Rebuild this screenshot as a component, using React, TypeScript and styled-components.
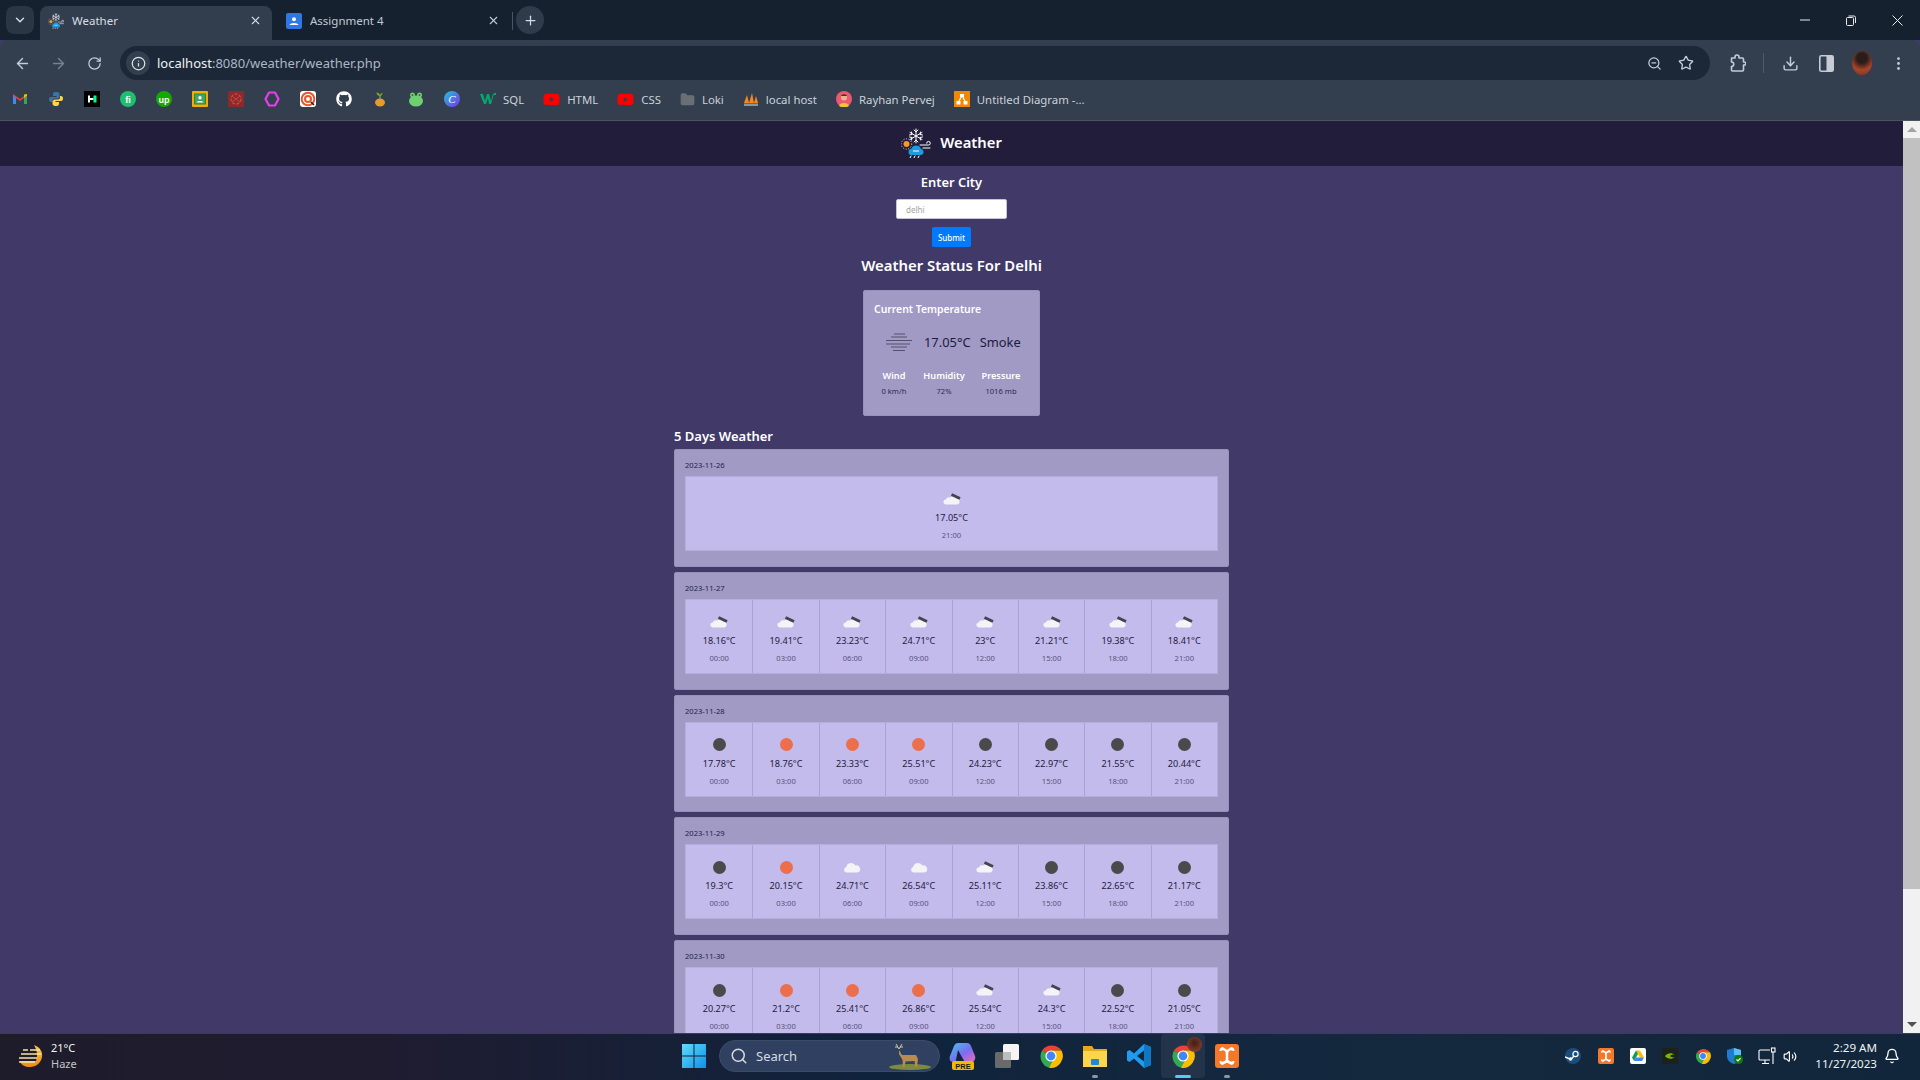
import React from "react";
import styled, { createGlobalStyle } from "styled-components";
import { ArrowLeft, ArrowRight, RotateCw, Info, ZoomOut, Star, Download, EllipsisVertical, Search, Bell, Volume2, X, Plus, ChevronDown, Folder } from "lucide-react";
import { FaGithub, FaYoutube } from "react-icons/fa";

const UI = `"Noto Sans", "Open Sans", "Liberation Sans", sans-serif`;

const Global = createGlobalStyle`
  html, body { margin: 0; padding: 0; height: 100%; overflow: hidden; }
  * { box-sizing: border-box; }
  body { font-family: ${UI}; }
`;

const Screen = styled.div`
  width: 1920px; height: 1080px; display: flex; flex-direction: column; overflow: hidden; background: #413a69;
`;

/* ---------- browser chrome ---------- */
const TabStrip = styled.div`
  height: 40px; background: #162130; display: flex; align-items: flex-end; flex: none; padding-left: 6px; color: #d5dbe3;
`;
const TabSwitcher = styled.div`
  width: 28px; height: 28px; margin-bottom: 6px; border-radius: 8px; background: #2b3645; display: flex; align-items: center; justify-content: center; margin-right: 6px;
`;
const Tab = styled.div<{ $active?: boolean }>`
  width: 232px; height: 34px; border-radius: 8px 8px 0 0; display: flex; align-items: center; padding: 0 10px 5px 8px; flex: none;
  font-size: 11.5px; gap: 8px; background: ${(p) => (p.$active ? "#323d4d" : "transparent")};
  color: ${(p) => (p.$active ? "#d7dde5" : "#c3cad4")};
  & + & { margin-left: 6px; }
`;
const TabTitle = styled.span`flex: 1; white-space: nowrap;`;
const TabDivider = styled.div`width: 1px; height: 18px; background: #4a5563; margin: 0 3px 10px 2px;`;
const NewTab = styled.div`
  width: 28px; height: 28px; border-radius: 50%; background: #2f3a4a; margin-bottom: 6px; display: flex; align-items: center; justify-content: center;
`;
const WindowControls = styled.div`
  margin-left: auto; display: flex; height: 40px; align-items: center; color: #e8ebef;
`;
const WindowBtn = styled.div`
  width: 46px; display: flex; align-items: center; justify-content: center;
`;
const Toolbar = styled.div`
  flex: none; height: 81px; background: #333e4e; border-bottom: 1px solid #4b535d; border-radius: 8px 8px 0 0; margin-top: 0;
`;
const NavRow = styled.div`
  height: 40px; display: flex; align-items: center; padding-top: 6px; color: #c5ccd6;
`;
const NavBtn = styled.div<{ $dim?: boolean }>`
  width: 36px; display: flex; align-items: center; justify-content: center; color: ${(p) => (p.$dim ? "#77818f" : "#c5ccd6")}; flex: none;
`;
const NavBtns = styled.div`display: flex; padding-left: 4px; width: 120px; flex: none;`;
const Omnibox = styled.div`
  width: 1590px; height: 34px; border-radius: 17px; background: #1c2838; display: flex; align-items: center; padding: 0 8px 0 6px; flex: none;
`;
const InfoBadge = styled.div`
  width: 24px; height: 24px; border-radius: 50%; background: #333e4e; display: flex; align-items: center; justify-content: center; margin-right: 7px; color: #dfe3e8;
`;
const Url = styled.span`
  font-size: 13px; color: #aeb6c1; flex: 1; white-space: nowrap; margin-top: -1px;
  b { font-weight: 400; color: #eef1f4; }
`;
const OmniIcon = styled.div`
  width: 32px; display: flex; justify-content: center; align-items: center; color: #c5ccd6;
`;
const ToolIcons = styled.div`
  display: flex; align-items: center; padding-left: 9px; flex: 1; color: #c5ccd6;
`;
const ToolSlot = styled.div`
  width: 36px; display: flex; justify-content: center; align-items: center;
`;
const ToolSep = styled.div`width: 1px; height: 20px; background: #4f5a69; margin: 0 8px 0 8px;`;
const Avatar = styled.div`
  width: 20px; height: 24px; border-radius: 50%; background: radial-gradient(circle at 50% 30%, #2a1c18 0 25%, #a8452a 60%, #7b3120); 
`;
const BookmarkRow = styled.div`
  height: 40px; display: flex; align-items: center; padding: 0 0 2px 9px; color: #ccd2da; font-size: 11.4px;
`;
const Bookmark = styled.div`
  display: flex; align-items: center; gap: 7px; height: 24px; padding: 0 16px 0 3px; white-space: nowrap; flex: none;
`;
const BookmarkIconOnly = styled.div`
  width: 36px; display: flex; align-items: center; justify-content: flex-start; padding-left: 3px; flex: none;
`;

/* ---------- page ---------- */
const Viewport = styled.div`flex: 1; min-height: 0; display: flex;`;
const Page = styled.main`
  flex: 1; min-width: 0; background: #413a69; overflow: hidden; display: flex; flex-direction: column; align-items: center; color: #fff;
  & > * { flex: none; }
`;
const Scrollbar = styled.div`
  width: 17px; flex: none; background: #f1f1f1; display: flex; flex-direction: column; align-items: center;
`;
const ScrollArrow = styled.div<{ $down?: boolean }>`
  height: 17px; flex: none; display: flex; align-items: center; justify-content: center; width: 100%;
  &::before { content: ""; border-left: 5px solid transparent; border-right: 5px solid transparent;
    ${(p) => (p.$down ? "border-top: 5px solid #505050;" : "border-bottom: 5px solid #a3a3a3;")} }
`;
const ScrollThumb = styled.div`width: 100%; height: 751px; background: #c1c1c1; flex: none;`;
const ScrollRest = styled.div`flex: 1;`;

const NavBar = styled.header`
  width: 100%; height: 45px; background: #231d3c; display: flex; align-items: center; justify-content: center; gap: 9px; padding-bottom: 2px;
`;
const Brand = styled.span`font-size: 14.8px; font-weight: 600; line-height: 1;`;
const FormHeading = styled.h3`
  margin: 6px 0 0; font-size: 12.9px; line-height: 20px; font-weight: 600;
`;
const CityInput = styled.input`
  display: block; margin-top: 7px; width: 111px; height: 20px; border: 1px solid #c5c2d4; border-radius: 2px; background: #fff; padding: 0 9px; font-size: 8px;
  font-family: ${UI}; &::placeholder { color: #a3a3a3; }
`;
const Submit = styled.button`
  display: block; margin-top: 8px; width: 39px; height: 20px; border: 0; border-radius: 2px; background: #007bff; color: #fff; font-size: 8px; font-weight: 500; font-family: ${UI}; padding: 0;
`;
const StatusTitle = styled.h2`
  margin: 6px 0 0; font-size: 14.9px; line-height: 24px; font-weight: 600;
`;
const CurrentCard = styled.section`
  margin-top: 13px; width: 177px; height: 126px; background: #a09ac5; border: 1px solid #9791bb; border-radius: 2px; padding: 10px 10px 0; display: flex; flex-direction: column;
`;
const CardTitle = styled.h4`margin: 0; font-size: 10.4px; line-height: 16px; font-weight: 600;`;
const CurrentRow = styled.div`
  display: flex; align-items: center; height: 30px; margin-top: 10px; padding-left: 11px; color: #1f1a40;
`;
const CurrentTemp = styled.span`font-size: 12.9px; margin-left: 11px;`;
const CurrentDesc = styled.span`font-size: 12.9px; margin-left: 9px;`;
const Stats = styled.div`
  display: grid; grid-template-columns: 40px 60px 54px; margin-top: 12px; text-align: center;
`;
const StatLabel = styled.div`font-size: 9.2px; line-height: 14px; font-weight: 600;`;
const StatValue = styled.div`font-size: 7.6px; line-height: 12px; margin-top: 2px; color: #2f2a55;`;
const FiveWrap = styled.section`width: 555px; margin-top: 10px;`;
const FiveTitle = styled.h3`margin: 0 0 3px; font-size: 13px; line-height: 20px; font-weight: 600;`;
const DayCard = styled.article`
  height: 117.75px; margin-bottom: 5px; background: #a09ac5; border: 1px solid #9791bb; border-radius: 2px; padding: 9px 10px 0;
`;
const DayDate = styled.div`font-size: 7.6px; line-height: 12px; margin-bottom: 5px; color: #231e48;`;
const Cells = styled.div`
  display: grid; grid-auto-flow: column; grid-auto-columns: 1fr; height: 75px; background: #c2bbeb; border: 1px solid #b5aedd;
`;
const Cell = styled.div`
  display: flex; flex-direction: column; align-items: center; padding-top: 12px; border-left: 1px solid #aaa2d0;
  &:first-child { border-left: 0; }
`;
const CellIcon = styled.div`height: 20px; display: flex; align-items: center; justify-content: center;`;
const CellTemp = styled.div`font-size: 9.1px; line-height: 14px; margin-top: 2px; color: #1f1a40; white-space: nowrap;`;
const CellTime = styled.div`font-size: 7.6px; line-height: 12px; margin-top: 4px; color: #595380;`;

const Dot = styled.div<{ $c: string }>`
  width: 13px; height: 13px; border-radius: 50%; background: ${(p) => p.$c};
`;

/* ---------- taskbar ---------- */
const Taskbar = styled.footer`
  height: 47px; flex: none; display: flex; align-items: center; padding-bottom: 2px; border-top: 1px solid #3c3e4a; color: #fff;
  background: linear-gradient(90deg, #1e1c2b 0%, #1f1c30 20%, #10233c 45%, #14293e 75%, #11263a 100%);
`;
const Widget = styled.div`
  width: 672px; flex: none; display: flex; align-items: center; padding-left: 18px; gap: 7px;
`;
const WidgetText = styled.div`font-size: 11px; line-height: 16px; color: #f3f3f3; span { display: block; color: #c4c4c8; }`;
const AppSlot = styled.div<{ $active?: boolean }>`
  width: 44px; height: 44px; flex: none; display: flex; align-items: center; justify-content: center; position: relative; border-radius: 4px;
  ${(p) => (p.$active ? "background: #23344a;" : "")}
`;
const RunDot = styled.span<{ $active?: boolean }>`
  position: absolute; bottom: 0; left: 50%; transform: translateX(-50%); height: 3px; border-radius: 2px;
  width: ${(p) => (p.$active ? "16px" : "6px")}; background: ${(p) => (p.$active ? "#5cc8f8" : "#8d97a4")};
`;
const AvatarBadge = styled.span`
  position: absolute; top: 3px; right: 3px; width: 15px; height: 15px; border-radius: 50%; background: radial-gradient(circle at 50% 40%, #3a2018, #a3452b);
`;
const SearchBox = styled.div`
  width: 221px; height: 32px; margin-left: 3px; margin-right: 1px; border-radius: 16px; background: #2f4060; border: 1px solid #3d4c66; display: flex; align-items: center; padding: 0 6px 0 10px; gap: 8px; font-size: 13px; color: #d6dae0; flex: none;
`;
const SearchLabel = styled.span`flex: 1;`;
const Tray = styled.div`margin-left: auto; display: flex; align-items: center;`;
const TraySlot = styled.div<{ $w?: number }>`
  width: ${(p) => p.$w ?? 32.3}px; display: flex; justify-content: center; align-items: center; flex: none;
`;
const Clock = styled.div`
  margin-left: 18px; text-align: right; font-size: 11.6px; line-height: 16px; color: #f0f2f4; white-space: nowrap;
`;
const BellSlot = styled.div`width: 30px; margin-right: 13px; display: flex; justify-content: center; flex: none;`;

/* ---------- drawings ---------- */
const LogoIcon = ({ size = 30 }: { size?: number }) => (
  <svg width={size} height={size} viewBox="0 0 30 30" fill="none">
    <g stroke="#fff" strokeWidth="1" strokeLinecap="round">
      <path d="M15 1v14M9 4.500l12 7M21 4.500l-12 7" />
      <path d="M13 2l2 2 2-2M13 14l2-2 2 2M8.500 7l2.500-.5-.5-2.500M21.500 9l-2.500.5.5 2.500M21.500 7l-2.500-.5.5-2.500M8.500 9l2.500.5-.5 2.500" />
      <path d="M19 17h8.500a1.800 1.800 0 1 0-1.800-1.800M22 20h7" />
      <path d="M10 28l-1 2M14 28l-1 2M18 28l-1 2" />
    </g>
    <circle cx="5.500" cy="16" r="3" fill="#f59a23" />
    <circle cx="5.500" cy="16" r="5.200" stroke="#ddd" strokeDasharray="1 1.600" />
    <path d="M10 27a3.200 3.200 0 0 1 .4-6.300 5 5 0 0 1 9.400 0 3.200 3.200 0 0 1 .2 6.300z" fill="#1d9be2" />
    <path d="M12 23h6" stroke="#fff" />
  </svg>
);
const MistIcon = () => (
  <svg width="28" height="20" viewBox="0 0 28 20" stroke="#55506c" strokeWidth="1.200">
    <path d="M9 2h11M6 5h16M1 8.500h26M1 12h24M6 15h16M8 18.500h12" />
  </svg>
);
const CloudDark = () => (
  <svg width="18" height="12" viewBox="0 0 18 12">
    <path d="M3 11.500a2.500 2.500 0 0 1-.2-5 3.500 3.500 0 0 1 4.500-2 4 4 0 0 1 6 1 3 3 0 0 1 .5 6z" fill="#f4f4f6" />
    <path d="M8.500 1.500L17 5.500" stroke="#45434f" strokeWidth="3" />
  </svg>
);
const CloudWhite = () => (
  <svg width="18" height="12" viewBox="0 0 18 12">
    <path d="M3.500 11.500a2.800 2.800 0 0 1-.3-5.500 5 5 0 0 1 9.300-1.500 3.600 3.600 0 0 1 2 7z" fill="#f4f4f6" />
  </svg>
);
const Gmail = () => (
  <svg width="16" height="16" viewBox="0 0 16 16"><path d="M1 3v10h3V7l4 3 4-3v6h3V3l-7 5z" fill="#ea4335" /><path d="M1 4v9h3V7z" fill="#4285f4" /><path d="M15 4v9h-3V7z" fill="#34a853" /><path d="M12 3.500V7l3-2.300V3z" fill="#fbbc04" /></svg>
);
const Python = () => (
  <svg width="16" height="16" viewBox="0 0 16 16"><path d="M8 1C5 1 5 2.500 5 4v1h3.500v1H3C1.500 6 1 7 1 8.500S1.500 11 3 11h1.500V9.500C4.500 8 5.500 7.500 7 7.500h2.500C11 7.500 11.500 6.500 11.500 5V3C11.500 1.500 10 1 8 1z" fill="#3776ab" /><path d="M8 15c3 0 3-1.500 3-3v-1H7.500v-1H13c1.500 0 2-1 2-2.500S14.500 5 13 5h-1v1.500C12 8 11 8.500 9.500 8.500H7C5.500 8.500 4.500 9.500 4.500 11v1.500C4.500 14.500 6 15 8 15z" fill="#ffd343" /></svg>
);
const Hn = () => (
  <svg width="16" height="16" viewBox="0 0 16 16"><rect width="16" height="16" fill="#000" /><path d="M4 4.500h2v7H4zM6 7h3.500v2H6z" fill="#fff" /><path d="M9.500 4.500h3v7h-3z" fill="#00fe8e" /></svg>
);
const Circ = ({ c, t, tc = "#fff" }: { c: string; t: string; tc?: string }) => (
  <svg width="16" height="16" viewBox="0 0 16 16"><circle cx="8" cy="8" r="8" fill={c} /><text x="8" y="11.500" textAnchor="middle" fontSize="9" fontWeight="700" fontFamily="Liberation Sans" fill={tc}>{t}</text></svg>
);
const Classroom = () => (
  <svg width="16" height="16" viewBox="0 0 16 16"><rect width="16" height="16" rx="1" fill="#f9ab00" /><rect x="2" y="2.500" width="12" height="11" fill="#1e8e3e" /><rect x="3" y="3.500" width="10" height="9" fill="#fff" opacity=".18" /><circle cx="8" cy="6.800" r="1.700" fill="#fff" /><path d="M4.500 11.500c.5-2 6.500-2 7 0z" fill="#fff" /></svg>
);
const Assign = () => (
  <svg width="16" height="16" viewBox="0 0 16 16"><rect width="16" height="16" rx="2" fill="#2f76e6" /><circle cx="8" cy="6.200" r="2" fill="#fff" /><path d="M3.500 12c.6-2.800 8.400-2.800 9 0z" fill="#fff" /></svg>
);
const RedSq = () => (
  <svg width="16" height="16" viewBox="0 0 16 16"><rect width="16" height="16" fill="#8a2a2a" /><circle cx="8" cy="8" r="5" fill="none" stroke="#c9463f" strokeWidth="1.300" strokeDasharray="3 1.300" /><path d="M4 5l8 6M12 5l-8 6" stroke="#c9463f" /></svg>
);
const PinkRing = () => (
  <svg width="16" height="16" viewBox="0 0 16 16"><path d="M5 1.500h6L14.500 8 11 14.500H5L1.500 8z" fill="none" stroke="#ea3cf0" strokeWidth="2.200" strokeLinejoin="round" /></svg>
);
const Target = () => (
  <svg width="16" height="16" viewBox="0 0 16 16"><rect width="16" height="16" rx="3" fill="#fff" /><circle cx="8" cy="8" r="6.300" fill="none" stroke="#e8562a" strokeWidth="2" /><circle cx="8" cy="8" r="3" fill="none" stroke="#e8562a" strokeWidth="2" /><path d="M11 11l3 3" stroke="#222" strokeWidth="1.500" /></svg>
);
const Sprout = () => (
  <svg width="16" height="16" viewBox="0 0 16 16"><ellipse cx="8" cy="11.500" rx="5" ry="4" fill="#e99a2c" /><path d="M8 8V4" stroke="#7a9a2a" strokeWidth="1.500" /><path d="M8 5C6 5 4.500 3.500 4.500 1.500 6.500 1.500 8 3 8 5zM8 5c1 0 2.500-1 2.500-3C9 2 8 3 8 5z" fill="#86a82a" /></svg>
);
const Frog = () => (
  <svg width="16" height="16" viewBox="0 0 16 16"><circle cx="4.500" cy="4" r="2.500" fill="#6fcf73" /><circle cx="11.500" cy="4" r="2.500" fill="#6fcf73" /><ellipse cx="8" cy="10" rx="7" ry="5.500" fill="#6fcf73" /><circle cx="4.500" cy="4" r=".9" fill="#2d6b30" /><circle cx="11.500" cy="4" r=".9" fill="#2d6b30" /></svg>
);
const Canva = () => (
  <svg width="16" height="16" viewBox="0 0 16 16"><defs><linearGradient id="cv" x1="0" y1="0" x2="1" y2="1"><stop offset="0" stopColor="#1fc7d4" /><stop offset="1" stopColor="#7b2ff2" /></linearGradient></defs><circle cx="8" cy="8" r="8" fill="url(#cv)" /><text x="8" y="12" textAnchor="middle" fontSize="11" fontStyle="italic" fontFamily="Liberation Serif" fill="#fff">C</text></svg>
);
const W3 = () => (
  <svg width="16" height="16" viewBox="0 0 16 16"><path d="M0 3h3l2 7 2-7h2l2 7 2-7h1l-3 10h-2L8 7l-2 6H4z" fill="#04aa6d" /><path d="M14 2h2v2h-2z" fill="#04aa6d" /></svg>
);
const Flame = () => (
  <svg width="16" height="16" viewBox="0 0 16 16"><path d="M1 12L4 4l2 8zM6 12l3-10 2 10zM11 12l2-7 2 7z" fill="#f28a1c" /><path d="M1 12.500h14V15H1z" fill="#8b93a5" /></svg>
);
const Person = () => (
  <svg width="16" height="16" viewBox="0 0 16 16"><circle cx="8" cy="8" r="8" fill="#ea5a70" /><circle cx="8" cy="6.500" r="3" fill="#e9b58c" /><path d="M3 15c1-4 9-4 10 0l-2 1H5z" fill="#f4c430" /><path d="M5 5c.5-2.500 5.500-2.500 6 0z" fill="#5a2c1c" /></svg>
);
const Drawio = () => (
  <svg width="16" height="16" viewBox="0 0 16 16"><rect width="16" height="16" fill="#f08705" /><path d="M6 3h4v3.500H6zM2.500 10h4v3.500h-4zM9.500 10h4v3.500h-4z" fill="#fff" /><path d="M7 6.500L5 10M9 6.500l2 3.500" stroke="#fff" strokeWidth="1.300" /></svg>
);
const ExtensionIcon = () => (
  <svg width="17" height="19" viewBox="0 0 17 19" fill="none" stroke="#c5ccd6" strokeWidth="1.600" strokeLinejoin="round">
    <path d="M2.500 4H6V3a2 2 0 0 1 4 0v1h3.500a1 1 0 0 1 1 1v3h.8a1.500 1.500 0 0 1 0 3h-.8v5a1 1 0 0 1-1 1h-10a1 1 0 0 1-1-1v-3.500a2 2 0 0 0 0-4.500V5a1 1 0 0 1 1-1z" />
  </svg>
);
const SidePanel = () => (
  <svg width="15" height="17" viewBox="0 0 15 17"><rect x=".8" y=".8" width="13.400" height="15.400" rx="1.500" fill="none" stroke="#c5ccd6" strokeWidth="1.600" /><rect x="7.500" y="1" width="6.500" height="15" fill="#c5ccd6" /></svg>
);
const Restore = () => (
  <svg width="10" height="11" viewBox="0 0 10 11" fill="none" stroke="#e8ebef"><rect x=".5" y="2.500" width="7" height="8" rx="1" /><path d="M2.500 1h5.500a1.500 1.500 0 0 1 1.500 1.500V8" /></svg>
);
const WinClose = () => <svg width="11" height="11" viewBox="0 0 11 11" stroke="#e8ebef"><path d="M.5.500l10 10M10.500.500l-10 10" /></svg>;
const WinMin = () => <svg width="10" height="2" viewBox="0 0 10 2" stroke="#e8ebef"><path d="M0 1h10" /></svg>;

const HazeIcon = () => (
  <svg width="26" height="24" viewBox="0 0 26 24"><defs><linearGradient id="hz" x1="0" y1="0" x2="0" y2="1"><stop offset="0" stopColor="#f8c44b" /><stop offset="1" stopColor="#f08a12" /></linearGradient></defs>
    <path d="M16 1c6 2 9 7 8 12-1 6-6 10-12 10-5 0-9-2-10-6h16c2-5 1-11-2-16z" fill="url(#hz)" />
    <path d="M5 6h5M12 6h10M3 10h20M1 14h18M1 18h16" stroke="#f6e2a8" strokeWidth="1.600" />
  </svg>
);
const WinLogo = () => (
  <svg width="24" height="24" viewBox="0 0 24 24"><defs><linearGradient id="wl" x1="0" y1="0" x2="1" y2="1"><stop offset="0" stopColor="#5fdcfb" /><stop offset="1" stopColor="#0f8fe6" /></linearGradient></defs><path d="M0 0h11.500v11.500H0zM12.500 0H24v11.500H12.500zM0 12.500h11.500V24H0zM12.500 12.500H24V24H12.500z" fill="url(#wl)" /></svg>
);
const Deer = () => (
  <svg width="46" height="30" viewBox="0 0 46 30"><ellipse cx="23" cy="26" rx="21" ry="3" fill="#7c8a3e" /><path d="M12 9l3 5 14 0 2 4-1 8h-1.500l-1-6-9 .5-1 5.500H16l-.5-7L12 13z" fill="#b98a52" /><path d="M9 3l3 5M15 3l-3 5M8 6h3M16 6h-3" stroke="#d9c9a8" /></svg>
);
const Copilot = () => (
  <svg width="28" height="30" viewBox="0 0 28 30"><defs><linearGradient id="cp" x1="0" y1="0" x2="1" y2="1"><stop offset="0" stopColor="#3ec8f0" /><stop offset=".55" stopColor="#7b6cf0" /><stop offset="1" stopColor="#f06cc0" /></linearGradient></defs><path d="M9 2h9c2 0 3 1 4 3l4 10c1 3-1 6-4 6h-4c-2 0-3-1-4-3L9 9 7 19c0 1-1 2-3 2-3 0-4-3-3-6L5 5c1-2 2-3 4-3z" fill="url(#cp)" /><rect x="3" y="20" width="22" height="9" rx="2" fill="#f5b800" /><text x="14" y="27.500" textAnchor="middle" fontSize="7.500" fontWeight="700" fontFamily="Liberation Sans" fill="#1b1b1b">PRE</text></svg>
);
const TaskView = () => (
  <svg width="24" height="24" viewBox="0 0 24 24"><rect x="8" y="0" width="16" height="16" rx="1.500" fill="#f5f5f5" /><rect x="0" y="8" width="16" height="16" rx="1.500" fill="#6a6a6a" /><rect x="8" y="8" width="8" height="8" fill="#bdbdbd" /></svg>
);
const Chrome = ({ s = 24 }: { s?: number }) => (
  <svg width={s} height={s} viewBox="0 0 24 24"><path d="M12 12L3 6.500A12 12 0 0 1 22.500 6.500H12z" fill="#ea4335" /><path d="M12 12l-9-5.500A12 12 0 0 0 10 23.800L15.500 17z" fill="#34a853" /><path d="M12 6.500h10.500A12 12 0 0 1 10 23.800l5-9z" fill="#fbbc04" /><circle cx="12" cy="12" r="5.600" fill="#fff" /><circle cx="12" cy="12" r="4.400" fill="#4285f4" /></svg>
);
const Explorer = () => (
  <svg width="24" height="24" viewBox="0 0 24 24"><path d="M0 2h9l2 3h13v4H0z" fill="#e7a91c" /><path d="M0 7h24v16H0z" fill="#fbd54c" /><rect x="8" y="15" width="8" height="6" rx="1" fill="#1e88d8" /></svg>
);
const VsCode = () => (
  <svg width="24" height="24" viewBox="0 0 24 24"><path d="M17 0l7 3v18l-7 3-10-9.500-4.500 3.500L0 16.500V7.500L2.500 6 7 9.500z" fill="#1f9cf0" /><path d="M17 6.500L10 12l7 5.500z" fill="#10243c" /><path d="M17 0l7 3v18l-7 3z" fill="#0e78c2" /></svg>
);
const Xampp = ({ s = 24 }: { s?: number }) => (
  <svg width={s} height={s} viewBox="0 0 24 24"><rect width="24" height="24" rx="3" fill="#f4772a" /><path d="M7 5c4 0 6 3 5 7s1 7 5 7M17 5c-4 0-6 3-5 7s-1 7-5 7" fill="none" stroke="#fff" strokeWidth="2.400" /><path d="M5.500 7a3 3 0 0 1 3-3M5.500 17a3 3 0 0 0 3 3M18.500 7a3 3 0 0 0-3-3M18.500 17a3 3 0 0 1-3 3" fill="none" stroke="#fff" strokeWidth="2" /></svg>
);
const Steam = () => (
  <svg width="16" height="16" viewBox="0 0 16 16"><circle cx="8" cy="8" r="8" fill="#1a4c7c" /><circle cx="10.500" cy="6" r="2.600" fill="none" stroke="#fff" strokeWidth="1.200" /><path d="M0 9l6 2.500 3-3.500" stroke="#fff" strokeWidth="1.400" fill="none" /><circle cx="5.500" cy="11" r="1.800" fill="#fff" /></svg>
);
const Drive = () => (
  <svg width="16" height="16" viewBox="0 0 16 16"><rect width="16" height="16" rx="2" fill="#fff" /><path d="M6 2.500h4l-2 3.700z" fill="#fbbc04" /><path d="M6 2.500L2 9.500l2 3.500 4-7z" fill="#0f9d58" /><path d="M10 2.500l4 7h-4L8 6z" fill="#fbbc04" /><path d="M4 13h8l2-3.500H6z" fill="#4285f4" /></svg>
);
const Nvidia = () => (
  <svg width="16" height="16" viewBox="0 0 16 16"><rect width="16" height="16" fill="#1c2219" /><path d="M3 8c2-3 7-4 10-1-2-1-4 0-5 1 1 1 3 2 5 1-3 3-8 2-10-1z" fill="#76b900" /></svg>
);
const Shield = () => (
  <svg width="16" height="16" viewBox="0 0 16 16"><path d="M7 0l7 2v6c0 4-3 7-7 8-4-1-7-4-7-8V2z" fill="#1f7ad1" /><path d="M7 0l7 2v5H7z" fill="#5cc1f2" /><circle cx="11.500" cy="11.500" r="4.500" fill="#0f7b0f" /><path d="M9.500 11.500l1.500 1.500 2.500-2.800" stroke="#fff" fill="none" strokeWidth="1.200" /></svg>
);
const Network = () => (
  <svg width="18" height="18" viewBox="0 0 18 18" fill="none" stroke="#fff" strokeWidth="1.100"><path d="M12 3H2a1 1 0 0 0-1 1v8a1 1 0 0 0 1 1h10M7 13v3M4 16.500h7" /><rect x="13.500" y="1" width="3.500" height="4" /><path d="M15 5v12" /></svg>
);

const days: { date: string; cells: [string, string, string][] }[] = [
  { date: "2023-11-26", cells: [["17.05°C", "21:00", "c"]] },
  { date: "2023-11-27", cells: [["18.16°C", "00:00", "c"], ["19.41°C", "03:00", "c"], ["23.23°C", "06:00", "c"], ["24.71°C", "09:00", "c"], ["23°C", "12:00", "c"], ["21.21°C", "15:00", "c"], ["19.38°C", "18:00", "c"], ["18.41°C", "21:00", "c"]] },
  { date: "2023-11-28", cells: [["17.78°C", "00:00", "d"], ["18.76°C", "03:00", "o"], ["23.33°C", "06:00", "o"], ["25.51°C", "09:00", "o"], ["24.23°C", "12:00", "d"], ["22.97°C", "15:00", "d"], ["21.55°C", "18:00", "d"], ["20.44°C", "21:00", "d"]] },
  { date: "2023-11-29", cells: [["19.3°C", "00:00", "d"], ["20.15°C", "03:00", "o"], ["24.71°C", "06:00", "w"], ["26.54°C", "09:00", "w"], ["25.11°C", "12:00", "c"], ["23.86°C", "15:00", "d"], ["22.65°C", "18:00", "d"], ["21.17°C", "21:00", "d"]] },
  { date: "2023-11-30", cells: [["20.27°C", "00:00", "d"], ["21.2°C", "03:00", "o"], ["25.41°C", "06:00", "o"], ["26.86°C", "09:00", "o"], ["25.54°C", "12:00", "c"], ["24.3°C", "15:00", "c"], ["22.52°C", "18:00", "d"], ["21.05°C", "21:00", "d"]] },
];

const WeatherGlyph = ({ k }: { k: string }) =>
  k === "c" ? <CloudDark /> : k === "w" ? <CloudWhite /> : <Dot $c={k === "d" ? "#4a4a4c" : "#ec6e4a"} />;

const iconOnly = [<Gmail />, <Python />, <Hn />, <Circ c="#1dbf73" t="fi" />, <Circ c="#14a800" t="up" />, <Classroom />, <RedSq />, <PinkRing />, <Target />, <FaGithub size={16} color="#fff" />, <Sprout />, <Frog />, <Canva />];

export default function App() {
  return (
    <Screen>
      <Global />
      <TabStrip>
        <TabSwitcher><ChevronDown size={14} strokeWidth={2.500} /></TabSwitcher>
        <Tab $active>
          <LogoIcon size={16} />
          <TabTitle>Weather</TabTitle>
          <X size={13} />
        </Tab>
        <Tab>
          <Assign />
          <TabTitle>Assignment 4</TabTitle>
          <X size={13} />
        </Tab>
        <TabDivider />
        <NewTab><Plus size={15} /></NewTab>
        <WindowControls>
          <WindowBtn><WinMin /></WindowBtn>
          <WindowBtn><Restore /></WindowBtn>
          <WindowBtn><WinClose /></WindowBtn>
        </WindowControls>
      </TabStrip>
      <Toolbar>
        <NavRow>
          <NavBtns>
            <NavBtn><ArrowLeft size={17} /></NavBtn>
            <NavBtn $dim><ArrowRight size={17} /></NavBtn>
            <NavBtn><RotateCw size={15} /></NavBtn>
          </NavBtns>
          <Omnibox>
            <InfoBadge><Info size={15} /></InfoBadge>
            <Url><b>localhost</b>:8080/weather/weather.php</Url>
            <OmniIcon><ZoomOut size={15} /></OmniIcon>
            <OmniIcon><Star size={16} /></OmniIcon>
          </Omnibox>
          <ToolIcons>
            <ToolSlot><ExtensionIcon /></ToolSlot>
            <ToolSep />
            <ToolSlot><Download size={17} /></ToolSlot>
            <ToolSlot><SidePanel /></ToolSlot>
            <ToolSlot><Avatar /></ToolSlot>
            <ToolSlot><EllipsisVertical size={17} /></ToolSlot>
          </ToolIcons>
        </NavRow>
        <BookmarkRow>
          {iconOnly.map((ic, i) => <BookmarkIconOnly key={i}>{ic}</BookmarkIconOnly>)}
          <Bookmark><W3 />SQL</Bookmark>
          <Bookmark><FaYoutube size={17} color="#ff0000" />HTML</Bookmark>
          <Bookmark><FaYoutube size={17} color="#ff0000" />CSS</Bookmark>
          <Bookmark><Folder size={15} fill="#6a6e75" color="#6a6e75" />Loki</Bookmark>
          <Bookmark><Flame />local host</Bookmark>
          <Bookmark><Person />Rayhan Pervej</Bookmark>
          <Bookmark><Drawio />Untitled Diagram -...</Bookmark>
        </BookmarkRow>
      </Toolbar>
      <Viewport>
        <Page>
          <NavBar>
            <LogoIcon />
            <Brand>Weather</Brand>
          </NavBar>
          <FormHeading>Enter City</FormHeading>
          <CityInput placeholder="delhi" readOnly />
          <Submit>Submit</Submit>
          <StatusTitle>Weather Status For Delhi</StatusTitle>
          <CurrentCard>
            <CardTitle>Current Temperature</CardTitle>
            <CurrentRow>
              <MistIcon />
              <CurrentTemp>17.05°C</CurrentTemp>
              <CurrentDesc>Smoke</CurrentDesc>
            </CurrentRow>
            <Stats>
              <div><StatLabel>Wind</StatLabel><StatValue>0 km/h</StatValue></div>
              <div><StatLabel>Humidity</StatLabel><StatValue>72%</StatValue></div>
              <div><StatLabel>Pressure</StatLabel><StatValue>1016 mb</StatValue></div>
            </Stats>
          </CurrentCard>
          <FiveWrap>
            <FiveTitle>5 Days Weather</FiveTitle>
            {days.map((d) => (
              <DayCard key={d.date}>
                <DayDate>{d.date}</DayDate>
                <Cells>
                  {d.cells.map(([t, h, k]) => (
                    <Cell key={h}>
                      <CellIcon><WeatherGlyph k={k} /></CellIcon>
                      <CellTemp>{t}</CellTemp>
                      <CellTime>{h}</CellTime>
                    </Cell>
                  ))}
                </Cells>
              </DayCard>
            ))}
          </FiveWrap>
        </Page>
        <Scrollbar>
          <ScrollArrow />
          <ScrollThumb />
          <ScrollRest />
          <ScrollArrow $down />
        </Scrollbar>
      </Viewport>
      <Taskbar>
        <Widget>
          <HazeIcon />
          <WidgetText>21°C<span>Haze</span></WidgetText>
        </Widget>
        <AppSlot><WinLogo /></AppSlot>
        <SearchBox>
          <Search size={18} />
          <SearchLabel>Search</SearchLabel>
          <Deer />
        </SearchBox>
        <AppSlot><Copilot /></AppSlot>
        <AppSlot><TaskView /></AppSlot>
        <AppSlot><Chrome /></AppSlot>
        <AppSlot><Explorer /><RunDot /></AppSlot>
        <AppSlot><VsCode /></AppSlot>
        <AppSlot $active><Chrome /><AvatarBadge /><RunDot $active /></AppSlot>
        <AppSlot><Xampp /><RunDot /></AppSlot>
        <Tray>
          <TraySlot><Steam /></TraySlot>
          <TraySlot><Xampp s={16} /></TraySlot>
          <TraySlot><Drive /></TraySlot>
          <TraySlot><Nvidia /></TraySlot>
          <TraySlot><Chrome s={16} /></TraySlot>
          <TraySlot><Shield /></TraySlot>
          <TraySlot><Network /></TraySlot>
          <TraySlot $w={14}><Volume2 size={17} /></TraySlot>
          <Clock>2:29 AM<br />11/27/2023</Clock>
          <BellSlot><Bell size={16} /></BellSlot>
        </Tray>
      </Taskbar>
    </Screen>
  );
}
